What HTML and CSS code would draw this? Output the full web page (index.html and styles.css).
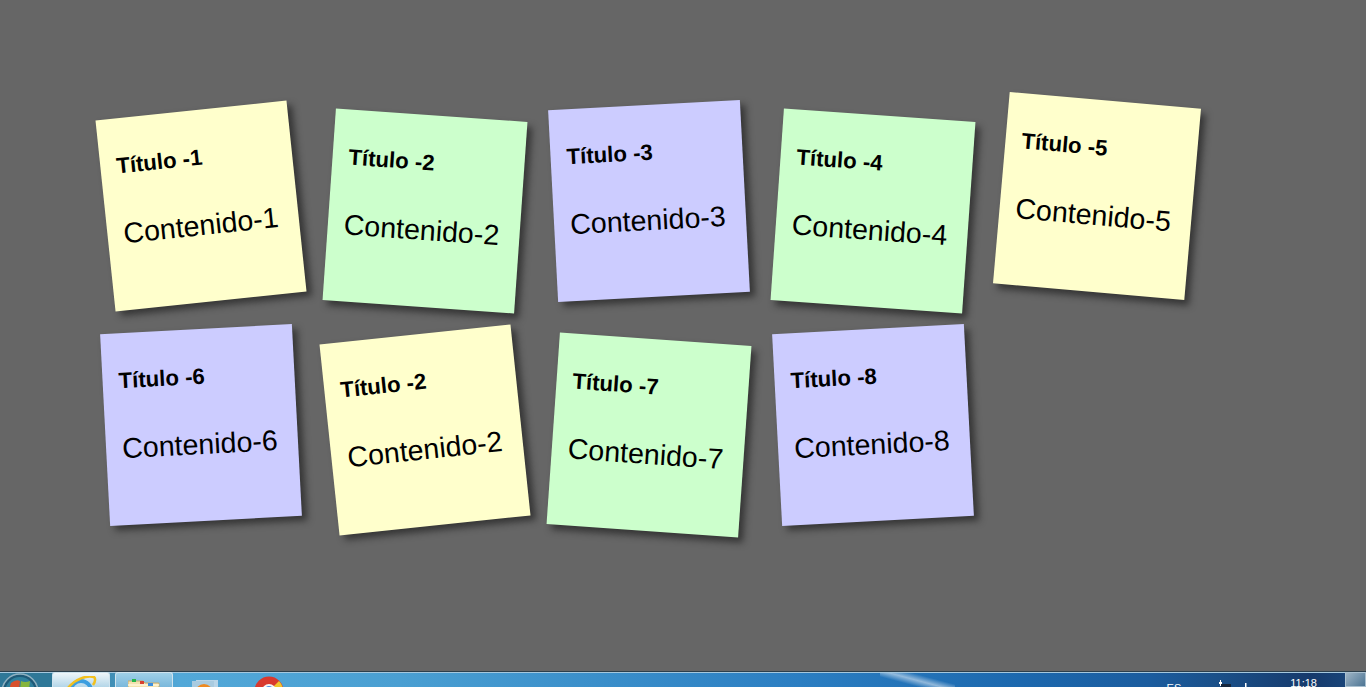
FILE: index.html
```html
<!DOCTYPE html>
<html lang="es">
<head>
  <meta charset="UTF-8">
  <meta name="viewport" content="width=device-width, initial-scale=1">
  <title>Notas</title>
  <link rel="stylesheet" href="styles.css">
</head>
<body>

  <!-- Notas -->
  <ul class="notes">
    <li class="note yellow tilt-a"><h2>Título -1</h2><p>Contenido-1</p></li>
    <li class="note green tilt-b"><h2>Título -2</h2><p>Contenido-2</p></li>
    <li class="note violet tilt-c"><h2>Título -3</h2><p>Contenido-3</p></li>
    <li class="note green tilt-b"><h2>Título -4</h2><p>Contenido-4</p></li>
    <li class="note yellow tilt-d"><h2>Título -5</h2><p>Contenido-5</p></li>
    <li class="note violet tilt-c"><h2>Título -6</h2><p>Contenido-6</p></li>
    <li class="note yellow tilt-a"><h2>Título -2</h2><p>Contenido-2</p></li>
    <li class="note green tilt-b"><h2>Título -7</h2><p>Contenido-7</p></li>
    <li class="note violet tilt-c"><h2>Título -8</h2><p>Contenido-8</p></li>
  </ul>

  <!-- Barra de tareas -->
  <footer class="taskbar">
    <div class="start">
      <svg width="40" height="40" viewBox="0 0 40 40">
        <circle cx="20" cy="20" r="18" fill="#1f5a78" stroke="#8fb0c0" stroke-width="1.5"/>
        <circle cx="20" cy="20" r="15" fill="#2f7f9c"/>
        <path d="M11 11q5-4 9-2l-1 9q-4-2-10 0z" fill="#d8502c"/>
        <path d="M21 9q4 2 9 0l-1 9q-5 1-9-1z" fill="#86b53c"/>
      </svg>
    </div>
    <div class="task active">
      <svg class="task-icon" width="32" height="28" viewBox="0 0 32 28">
        <circle cx="16" cy="15" r="10" fill="none" stroke="#3b9ee0" stroke-width="4"/>
        <path d="M3 12C10 3 22-1 29 1c2 2 1 5-1 8" fill="none" stroke="#f2c01e" stroke-width="2.5"/>
      </svg>
    </div>
    <div class="task">
      <svg class="task-icon folder" width="32" height="28" viewBox="0 0 32 28">
        <path d="M0 3h15l2 2h14v23H0z" fill="#f3e2b0" stroke="#c9ab6c"/>
        <path d="M0 7h31M0 11h31" stroke="#fff6d8" stroke-width="1.5"/>
        <rect x="4" y="1" width="4" height="3" fill="#25b84a"/>
        <rect x="12" y="3" width="4" height="3" fill="#d8402f"/>
        <rect x="20" y="5" width="5" height="3" fill="#3a8ee0"/>
      </svg>
    </div>
    <svg class="app-icon" width="26" height="28" viewBox="0 0 26 28">
      <rect x="4" y="0" width="22" height="28" fill="#b9d5e8"/>
      <rect x="0" y="1" width="22" height="27" fill="#a9cbe0"/>
      <circle cx="12" cy="13" r="9" fill="#ee8a22"/>
    </svg>
    <svg class="app-icon chrome" width="30" height="30" viewBox="0 0 30 30">
      <circle cx="15" cy="15" r="14.5" fill="#d9392e"/>
      <path d="M25 5a14.5 14.5 0 0 1 4 10H15z" fill="#f0c52e"/>
      <path d="M1 15a14.5 14.5 0 0 0 4 10l10-10z" fill="#3fa64a"/>
      <circle cx="15" cy="15" r="7" fill="#f4f4f4"/>
      <circle cx="15" cy="15" r="5" fill="#4b8de8"/>
    </svg>
    <div class="tray">
      <span class="lang">ES</span>
      <svg class="tray-icons" width="32" height="15" viewBox="0 0 32 15">
        <path d="M3 9h3v2H3zM4 7h1v6H4z" fill="#fff"/>
        <rect x="5" y="11" width="10" height="4" fill="#16263c"/>
        <rect x="29" y="10" width="1.5" height="5" fill="#fff"/>
      </svg>
      <span class="clock">11:18</span>
      <span class="show-desktop"></span>
    </div>
  </footer>

</body>
</html>
```

FILE: styles.css
```css
* { box-sizing: border-box; }
html, body { height: 100%; }
body {
  margin: 0;
  background: #666;
  font-family: "Liberation Sans", Arial, sans-serif;
  color: #000;
  display: flex;
  flex-direction: column;
  overflow: hidden;
}

.notes {
  flex: 1;
  list-style: none;
  margin: 0;
  padding: 110px 0 0 105px;
  display: grid;
  grid-template-columns: repeat(5, 192px);
  grid-auto-rows: 192px;
  gap: 32px;
}
.note {
  padding: 16px;
  box-shadow: 5px 5px 7px rgba(33, 33, 33, .7);
}
.note h2 { margin: 19px 0 0; font-size: 22.2px; }
.note p { margin: 38px 0 0; font-size: 28.6px; }

.yellow { background: #ffc; }
.green { background: #cfc; }
.violet { background: #ccf; }

.tilt-a { transform: rotate(-6deg); }
.tilt-b { transform: translateY(5px) rotate(4deg); }
.tilt-c { transform: translateY(-5px) rotate(-3deg); }
.tilt-d { transform: translateY(-10px) rotate(5deg); }

/* solo se ve la parte de arriba de la barra */
.taskbar {
  height: 16px;
  flex: none;
  display: flex;
  position: relative;
  overflow: hidden;
  border-top: 1px solid #2c3f4c;
  box-shadow: inset 0 1px #a5c8de;
  background: linear-gradient(90deg, #2f7898 0, #2f7898 52px, #52a8d8 180px, #4a9fd2 400px, #2b7ec2 800px, #1c68ae 1020px, #1b5c9e 1150px, #1a4f88 1220px, #163a6c 1310px, #1a4a80 100%);
}
/* brillo diagonal de la barra */
.taskbar::after {
  content: "";
  position: absolute;
  left: 880px;
  top: 1px;
  width: 75px;
  height: 15px;
  background: linear-gradient(195deg, transparent 32%, rgba(255, 255, 255, .5) 50%, transparent 68%);
}
.start { width: 52px; flex: none; }
.start svg { display: block; }
.task {
  position: relative;
  z-index: 1;
  width: 58px;
  margin-right: 5px;
  flex: none;
  display: flex;
  justify-content: center;
  border: 1px solid #cfe3ee;
  border-bottom: 0;
  border-radius: 3px 3px 0 0;
  background: linear-gradient(#9fd0e8, #7ab8dc);
}
.task.active { background: linear-gradient(#eef6fa, #b4d6e8); }
.task-icon { margin-top: 3px; flex: none; }
.folder { margin-top: 5px; }
.app-icon { margin: 8px 0 0 14px; flex: none; }
.chrome { margin: 4px 0 0 36px; }

.tray {
  margin-left: auto;
  display: flex;
  color: #fff;
  font-size: 11px;
}
.lang { margin-top: 10px; }
.tray-icons { margin: 1px 0 0 35px; flex: none; }
.clock { margin: 5px 28px 0 42px; }
.show-desktop {
  width: 21px;
  border: 1px solid #a9c0d0;
  background: linear-gradient(135deg, #9db4c6, #4d7594);
}
```
